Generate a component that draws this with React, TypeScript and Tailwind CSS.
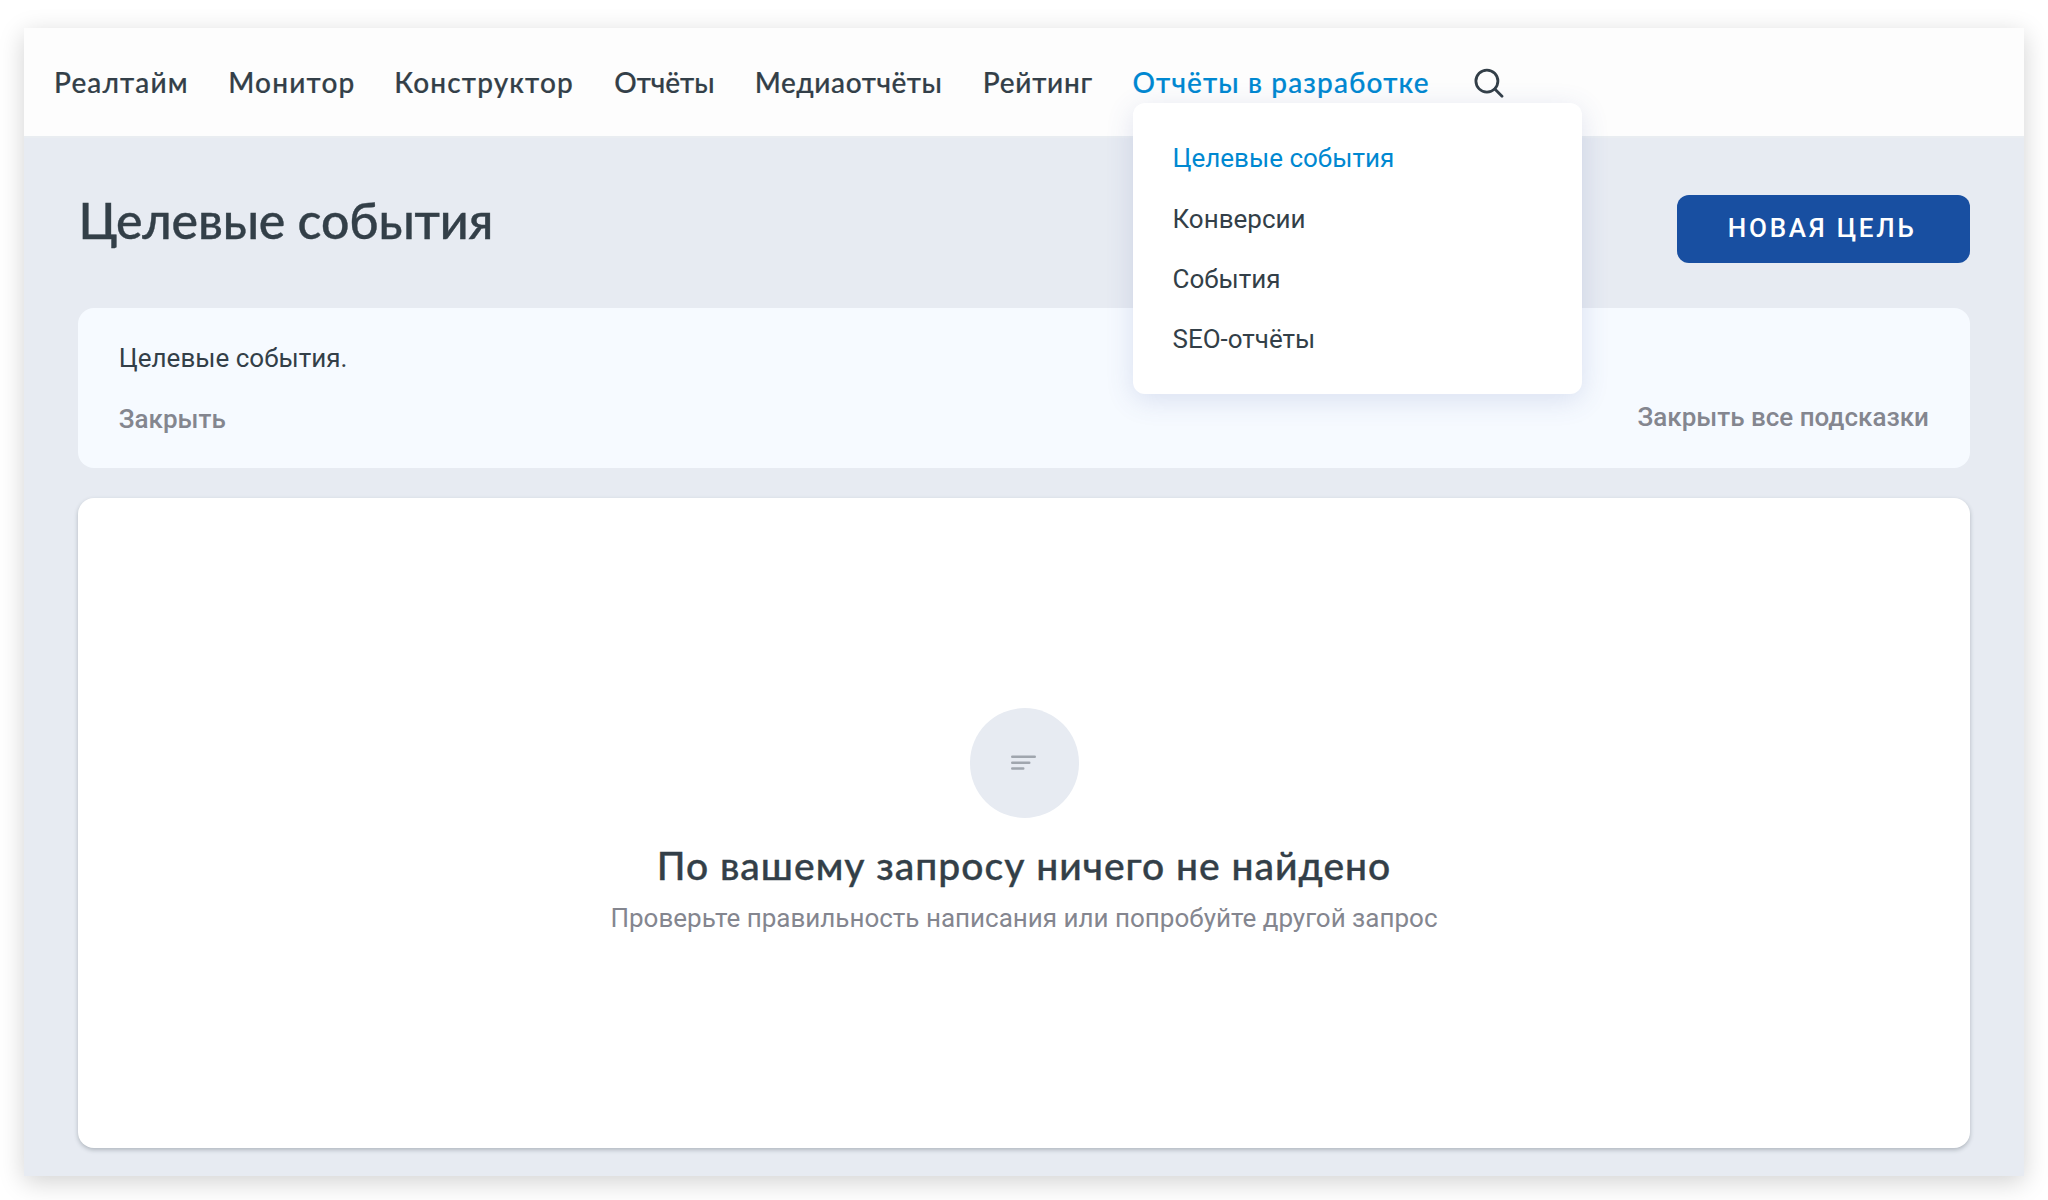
const NAV = [
  { label: 'Реалтайм', cls: 'w-[134.2px] tracking-[1.15px]' },
  { label: 'Монитор', cls: 'w-[126px] tracking-[1.2px]' },
  { label: 'Конструктор', cls: 'w-[180px] tracking-[1.15px]' },
  { label: 'Отчёты', cls: 'w-[100.5px] tracking-0' },
  { label: 'Медиаотчёты', cls: 'w-[188px] tracking-[0.6px]' },
  { label: 'Рейтинг', cls: 'w-[109.8px] tracking-[0.75px]' },
];

const MENU = ['Целевые события', 'Конверсии', 'События', 'SEO-отчёты'];

function Dropdown() {
  return (
    <div className="absolute left-px top-[75px] z-10 flex h-[291px] w-[449px] flex-col rounded-xl bg-white pl-[39px] pt-[25px] font-['Roboto',sans-serif] text-[26px] font-normal leading-[60px] tracking-normal shadow-[0_6px_28px_rgba(70,90,160,0.16)] [-webkit-text-stroke:0]">
      {MENU.map((item, i) => (
        <a key={item} className={i === 0 ? 'mb-px text-[#0088d1]' : 'text-[#333f48]'}>
          {item}
        </a>
      ))}
    </div>
  );
}

function Header() {
  return (
    <header className="flex h-[110px] shrink-0 border-b-2 border-[#e9edf1] bg-[#fdfdfd] pl-[30px] font-['Lato',sans-serif] text-[28px] font-medium leading-[108px] text-[#333f48] [-webkit-text-stroke:0.2px]">
      <nav className="flex gap-10 whitespace-nowrap">
        {NAV.map((n) => (
          <a key={n.label} className={n.cls}>
            {n.label}
          </a>
        ))}
        <div className="relative w-[297px] tracking-[1.15px] text-[#0088d1]">
          Отчёты в разработке
          <Dropdown />
        </div>
      </nav>
      <svg
        className="ml-[44.5px] mt-[40px] size-[30px]"
        viewBox="0 0 30 30"
        fill="none"
        stroke="#333f48"
        strokeWidth="2.8"
        strokeLinecap="round"
      >
        <circle cx="12.9" cy="13.1" r="11" />
        <path d="M20.8 21 28 28.2" />
      </svg>
    </header>
  );
}

export default function App() {
  return (
    <div className="h-[1200px] overflow-hidden bg-white px-6 pb-6 pt-7 font-['Roboto',sans-serif] text-[26px] text-[#333f48]">
      <div className="flex h-full flex-col bg-[#e7ebf2] shadow-[0_6px_24px_rgba(0,0,0,0.18)]">
        <Header />
        <main className="flex flex-1 flex-col px-[54.4px] pb-7">
          <div className="flex h-[169.5px] items-start justify-between">
            <h1 className="mt-[52px] whitespace-nowrap font-['Lato',sans-serif] text-[50px] font-medium leading-[60px] tracking-[-0.15px] [-webkit-text-stroke:0.4px]">
              Целевые события
            </h1>
            <button className="mt-[57.4px] h-[67.5px] w-[293px] rounded-xl bg-[#184fa1] pb-px pr-[2px] font-medium tracking-[2.75px] text-white">
              НОВАЯ ЦЕЛЬ
            </button>
          </div>

          <section className="flex h-[160px] items-start justify-between rounded-2xl bg-[#f6faff] px-[40.4px] pt-[20px] leading-[60px]">
            <div>
              <p>Целевые события.</p>
              <button className="mt-px block font-medium text-[#84868f]">Закрыть</button>
            </div>
            <button className="mr-[0.3px] mt-[59px] font-medium text-[#84868f]">Закрыть все подсказки</button>
          </section>

          <section className="mt-[30.5px] flex flex-1 flex-col items-center rounded-2xl bg-white shadow-[0_2px_4px_rgba(51,63,72,0.3)]">
            <div className="mt-[209.5px] flex h-[110px] w-[109px] items-center justify-center rounded-full bg-[#e7ebf2]">
              <svg
                className="-ml-px"
                width="25"
                height="15"
                viewBox="0 0 25 15"
                stroke="#a0a6ae"
                strokeWidth="2.4"
                strokeLinecap="round"
              >
                <path d="M1.2 1.7H23.8M1.2 7.7H18.3M1.2 13.5H12.3" />
              </svg>
            </div>
            <h2 className="mt-5 font-['Lato',sans-serif] text-[39px] font-medium leading-[54px] tracking-[1px] [-webkit-text-stroke:0.4px]">
              По вашему запросу ничего не найдено
            </h2>
            <p className="mt-1 leading-[44px] text-[#84868f]">
              Проверьте правильность написания или попробуйте другой запрос
            </p>
          </section>
        </main>
      </div>
    </div>
  );
}
